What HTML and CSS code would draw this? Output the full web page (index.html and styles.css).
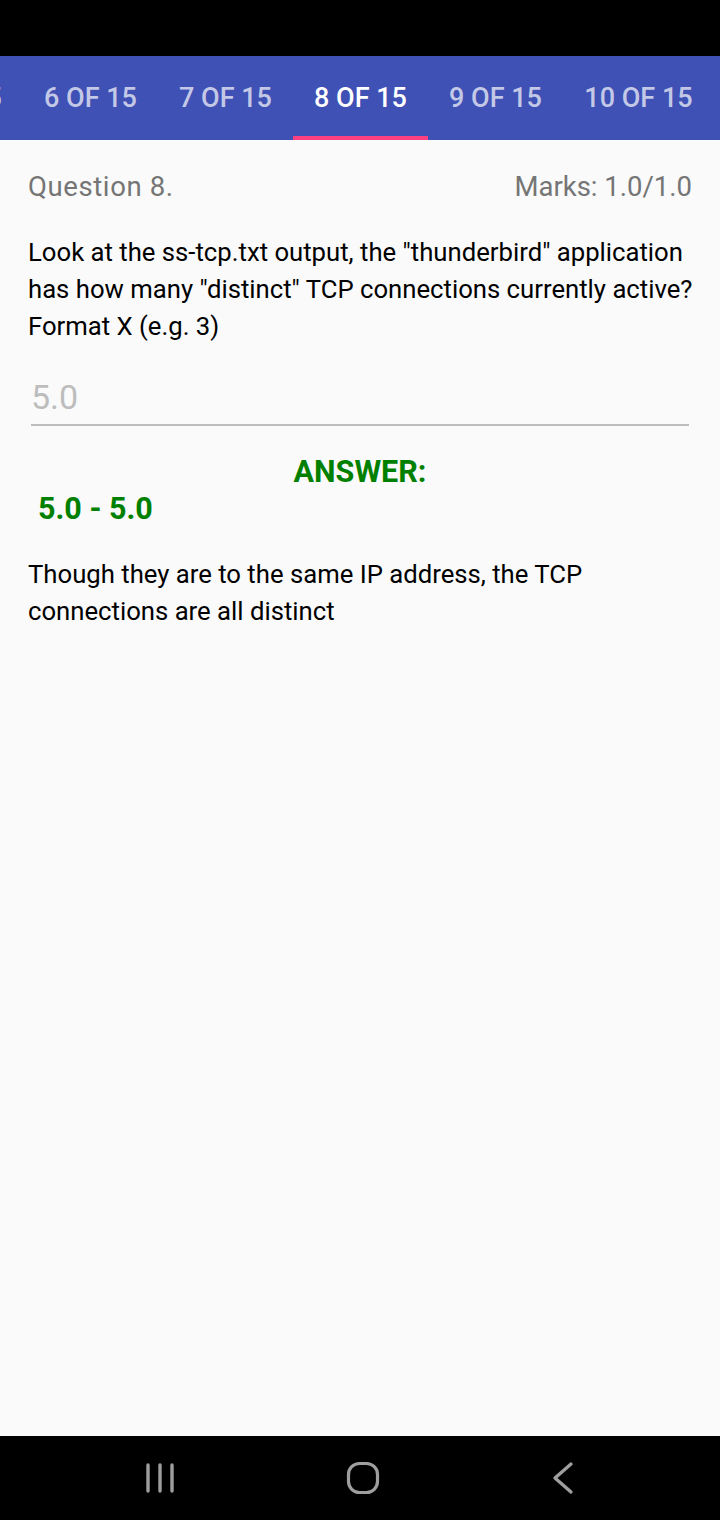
FILE: index.html
```html
<!DOCTYPE html>
<html>
<head>
<meta charset="utf-8">
<link rel="stylesheet" href="styles.css">
</head>
<body>
<div class="screen">
  <div class="status"></div>
  <div class="tabs">
    <div class="tab-strip">
      <div class="tab">5 OF 15</div>
      <div class="tab">6 OF 15</div>
      <div class="tab">7 OF 15</div>
      <div class="tab active">8 OF 15</div>
      <div class="tab">9 OF 15</div>
      <div class="tab">10 OF 15</div>
    </div>
  </div>
  <main class="content">
    <div class="head-row">
      <span class="qnum">Question 8.</span>
      <span class="marks">Marks: 1.0/1.0</span>
    </div>
    <p class="question">Look at the ss-tcp.txt output, the "thunderbird" application has how many "distinct" TCP connections currently active? Format X (e.g. 3)</p>
    <div class="input">5.0</div>
    <div class="answer-label">ANSWER:</div>
    <div class="answer-value">5.0 - 5.0</div>
    <p class="explain">Though they are to the same IP address, the TCP connections are all distinct</p>
  </main>
  <div class="navbar">
    <svg class="nav-icon" width="40" height="40" viewBox="0 0 40 40"><path d="M8 7v26M20 7v26M32 7v26" stroke="#9e9e9e" stroke-width="3.4" stroke-linecap="round" fill="none"/></svg>
    <svg class="nav-icon" width="40" height="40" viewBox="0 0 40 40"><rect x="5.5" y="5.5" width="29" height="29" rx="11" stroke="#9e9e9e" stroke-width="3.2" fill="none"/></svg>
    <svg class="nav-icon" width="40" height="40" viewBox="0 0 40 40"><path d="M26 6L10 20L26 34" stroke="#9e9e9e" stroke-width="3.4" stroke-linecap="round" stroke-linejoin="round" fill="none"/></svg>
  </div>
</div>
</body>
</html>
```

FILE: styles.css
```css
* { box-sizing: border-box; }
html, body { margin: 0; padding: 0; }
body {
  width: 720px;
  height: 1520px;
  overflow: hidden;
  background: #fafafa;
  font-family: Roboto, "Noto Sans", sans-serif;
}
.screen {
  display: flex;
  flex-direction: column;
  height: 1520px;
}
.status {
  height: 56px;
  background: #000;
  flex: none;
}
.tabs {
  height: 84px;
  background: #3f51b5;
  overflow: hidden;
  flex: none;
}
.tab-strip {
  display: flex;
  height: 84px;
  margin-left: -112px;
}
.tab {
  flex: none;
  width: 135px;
  height: 84px;
  display: flex;
  align-items: center;
  justify-content: center;
  font-size: 27px;
  font-weight: 500;
  color: rgba(255,255,255,0.7);
  white-space: nowrap;
  border-bottom: 4px solid transparent;
  padding-top: 4px;
}
.tab:last-child { width: 151px; }
.tab.active {
  color: #fff;
  border-bottom-color: #ff4081;
}
.content {
  flex: 1;
  padding: 0 28px;
}
.head-row {
  display: flex;
  justify-content: space-between;
  align-items: baseline;
  margin-top: 28px;
  font-size: 27.5px;
  color: #757575;
  line-height: 38px;
}
.qnum { letter-spacing: 0.6px; }
.question {
  margin: 28px -12px 0 0;
  font-size: 25.7px;
  line-height: 37px;
  color: #000;
}
.input {
  margin: 29px 3px 0 3px;
  font-size: 34px;
  color: #bdbdbd;
  line-height: 46px;
  padding-left: 0;
  padding-bottom: 4px;
  border-bottom: 2px solid #bdbdbd;
}
.answer-label {
  margin-top: 28px;
  text-align: center;
  font-size: 30.5px;
  font-weight: 700;
  color: #008000;
  line-height: 36px;
}
.answer-value {
  font-size: 30.5px;
  font-weight: 700;
  color: #008000;
  line-height: 38px;
  padding-left: 10px;
}
.explain {
  margin: 28px 0 0;
  font-size: 25.7px;
  line-height: 37px;
  color: #000;
}
.navbar {
  height: 84px;
  background: #000;
  flex: none;
  display: flex;
  align-items: center;
  justify-content: space-between;
  padding: 0 135px 0 140px;
}
.nav-icon { display: block; }
```
